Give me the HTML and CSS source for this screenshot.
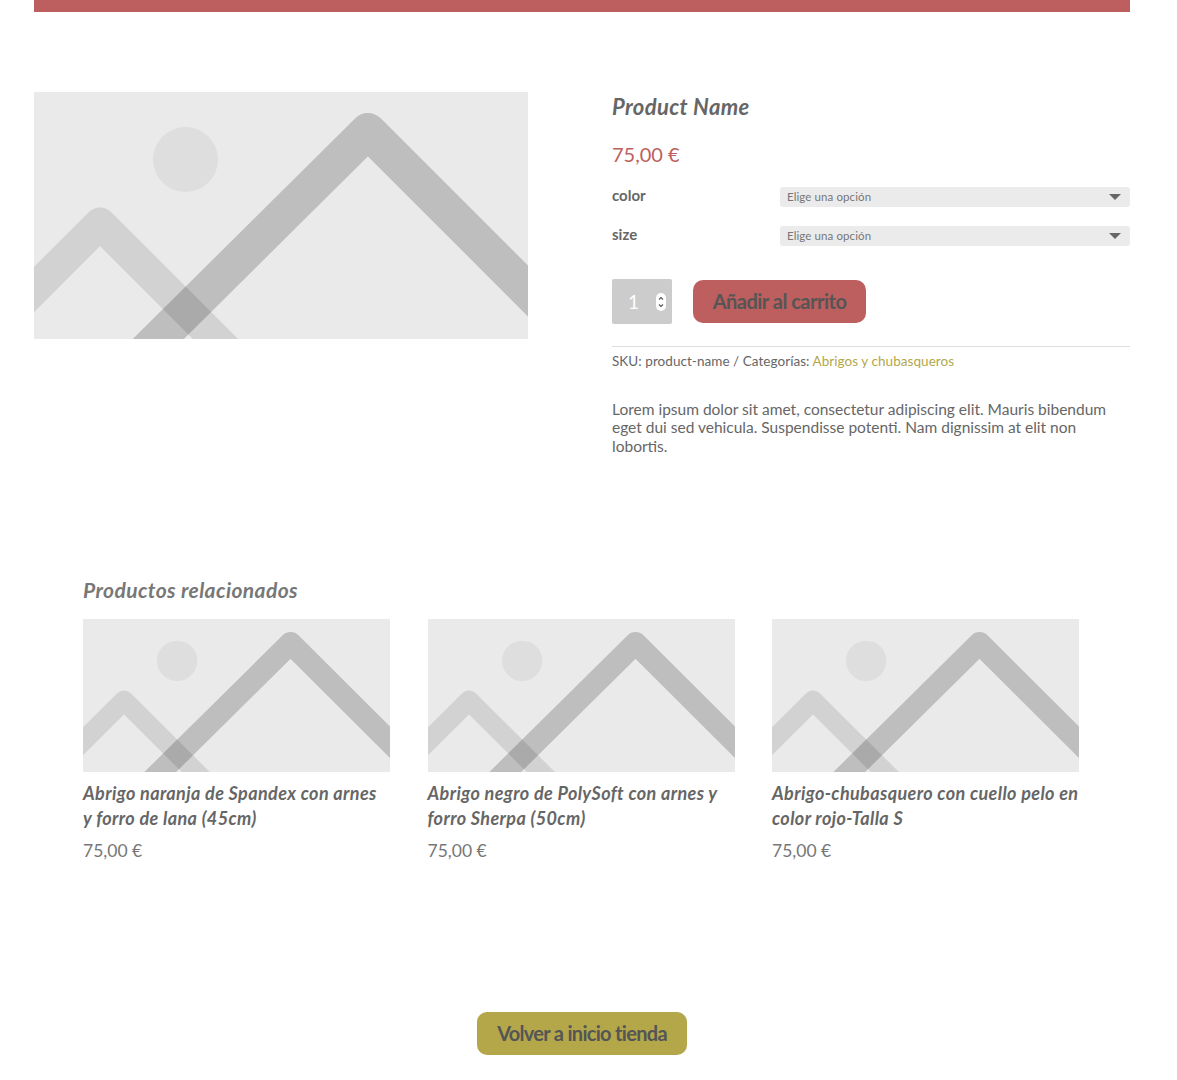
FILE: index.html
```html
<!DOCTYPE html>
<html lang="es">
<head>
  <meta charset="UTF-8">
  <title>Product Name</title>
  <link rel="stylesheet" href="styles.css">
</head>
<body>
  <svg class="sprite" aria-hidden="true">
    <symbol id="placeholder" viewBox="0 0 494 247" preserveAspectRatio="none">
      <rect width="494" height="247" fill="#eaeaea"/>
      <circle cx="151.5" cy="67.5" r="32.5" fill="#dedede"/>
      <path d="M-20 217.5 L66 131.5 L215 280.5" fill="none" stroke="#000" stroke-opacity="0.1" stroke-width="32" stroke-linejoin="round"/>
      <path d="M88 283 L334 39 L520 225" fill="none" stroke="#000" stroke-opacity="0.19" stroke-width="36" stroke-linejoin="round"/>
    </symbol>
  </svg>

  <div class="page">
    <div class="top-bar"></div>

    <div class="product">
      <svg class="product-img"><use href="#placeholder"/></svg>
      <div class="summary">
        <h1 class="product-title">Product Name</h1>
        <div class="product-price">75,00 €</div>
        <div class="variations">
          <div class="variation">
            <span class="variation-label">color</span>
            <div class="select">Elige una opción</div>
          </div>
          <div class="variation">
            <span class="variation-label">size</span>
            <div class="select">Elige una opción</div>
          </div>
        </div>
        <div class="cart-form">
          <div class="qty">
            <span>1</span>
            <span class="qty-spin">
              <svg width="10" height="18" viewBox="0 0 10 18">
                <path d="M3 6.5 L5 4.5 L7 6.5 M3 11.5 L5 13.5 L7 11.5" fill="none" stroke="#555" stroke-width="1.1"/>
              </svg>
            </span>
          </div>
          <a class="btn btn-cart">Añadir al carrito</a>
        </div>
        <div class="meta">SKU: product-name / Categorías: <a class="meta-link">Abrigos y chubasqueros</a></div>
        <p class="desc">Lorem ipsum dolor sit amet, consectetur adipiscing elit. Mauris bibendum eget dui sed vehicula. Suspendisse potenti. Nam dignissim at elit non lobortis.</p>
      </div>
    </div>

    <div class="related">
      <h2 class="related-title">Productos relacionados</h2>
      <div class="related-grid">
        <div class="card">
          <svg class="card-img"><use href="#placeholder"/></svg>
          <div class="card-title">Abrigo naranja de Spandex con arnes<br>y forro de lana (45cm)</div>
          <div class="card-price">75,00 €</div>
        </div>
        <div class="card">
          <svg class="card-img"><use href="#placeholder"/></svg>
          <div class="card-title">Abrigo negro de PolySoft con arnes y forro Sherpa (50cm)</div>
          <div class="card-price">75,00 €</div>
        </div>
        <div class="card">
          <svg class="card-img"><use href="#placeholder"/></svg>
          <div class="card-title">Abrigo-chubasquero con cuello pelo en color rojo-Talla S</div>
          <div class="card-price">75,00 €</div>
        </div>
      </div>
    </div>

    <div class="back">
      <a class="btn btn-back">Volver a inicio tienda</a>
    </div>
  </div>
</body>
</html>
```

FILE: styles.css
```css
body { margin:0; background:#fff; color:#666; font-family:Lato,sans-serif; }
.sprite { display:none; }
.page { padding:0 47px 25px 34px; }
.top-bar { height:12px; background:#bd5f5e; }

/* product */
.product { display:grid; grid-template-columns:494px 518px; column-gap:84px; padding-top:80px; }
.product-img { display:block; width:494px; height:247px; }
.product-title { margin:0; font-size:22px; line-height:30px; font-weight:700; font-style:italic; color:#666; letter-spacing:0.35px; }
.product-price { margin-top:17px; font-size:20px; line-height:30px; color:#bd5f5e; }

.variations { display:flex; flex-direction:column; gap:19px; margin-top:18px; }
.variation { display:grid; grid-template-columns:168px 350px; align-items:center; }
.variation-label { font-size:15px; line-height:18px; font-weight:700; color:#666; position:relative; top:-2px; }
.select {
  height:20px; line-height:20px; padding-left:7px; position:relative;
  background:#ebebeb; border-radius:3px; font-size:11.5px; color:#777; letter-spacing:0.1px;
}
.select::after {
  content:""; position:absolute; right:9px; top:7px;
  border-left:6px solid transparent; border-right:6px solid transparent; border-top:6px solid #666;
}

.cart-form { display:flex; align-items:center; gap:21px; margin-top:33px; }
.qty {
  width:60px; height:45px; box-sizing:border-box; padding:0 6px 0 16px;
  display:flex; align-items:center; justify-content:space-between;
  background:#ccc; border-radius:2px; color:#fff; font-size:19px;
}
.qty-spin { width:10px; height:18px; background:#fff; border-radius:5px; }
.qty-spin svg { display:block; }
.btn { display:block; height:43px; line-height:43px; text-align:center; border-radius:10px; color:#555; font-size:20px; font-weight:700; letter-spacing:-0.5px; }
.btn-cart { width:173px; background:#bd5f5e; }

.meta { margin-top:22px; padding-top:5px; border-top:1px solid #ddd; font-size:13.5px; line-height:18px; color:#666; letter-spacing:0.05px; }
.meta-link { color:#b3a74a; }
.desc { margin:30px 0 0; font-size:15.5px; line-height:18.4px; color:#666; }

/* related */
.related { padding:120px 51px 0 49px; }
.related-title { margin:0; font-size:21px; line-height:30px; font-weight:700; font-style:italic; color:#777; letter-spacing:0.4px; }
.related-grid { display:grid; grid-template-columns:repeat(3, 1fr); column-gap:37.5px; margin-top:14px; }
.card-img { display:block; width:100%; height:153px; }
.card-title { margin-top:9px; font-size:18px; line-height:24.5px; font-weight:700; font-style:italic; color:#666; letter-spacing:0.38px; }
.card-price { margin-top:9px; font-size:17.5px; line-height:24px; color:#777; }

.back { display:flex; justify-content:center; margin-top:149px; }
.btn-back { width:210px; background:#b3a74a; letter-spacing:-0.7px; }
```
